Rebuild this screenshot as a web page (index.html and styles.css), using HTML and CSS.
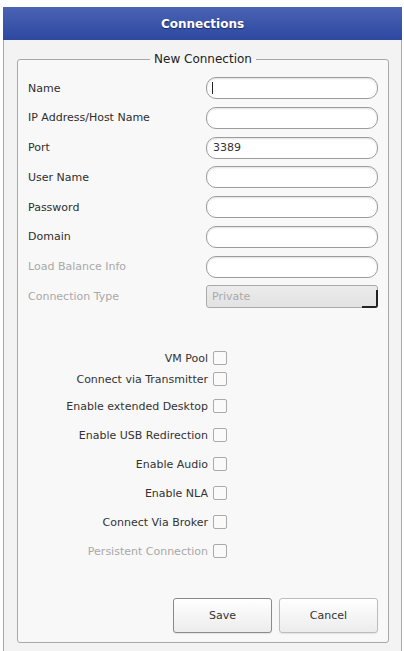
FILE: index.html
```html
<!DOCTYPE html>
<html lang="en">
<head>
  <meta charset="UTF-8" />
  <meta name="viewport" content="width=device-width, initial-scale=1" />
  <title>Connections</title>
  <link rel="stylesheet" href="styles.css">
</head>
<body>
  <div class="window">
    <div class="titlebar">Connections</div>
    <fieldset class="group">
      <legend>New Connection</legend>

      <div class="form-grid">
        <label>Name</label>
        <div class="field has-caret"><input type="text" value="" /></div>
        <label>IP Address/Host Name</label>
        <div class="field"><input type="text" value="" /></div>
        <label>Port</label>
        <div class="field"><input type="text" value="3389" /></div>
        <label>User Name</label>
        <div class="field"><input type="text" value="" /></div>
        <label>Password</label>
        <div class="field"><input type="password" value="" /></div>
        <label>Domain</label>
        <div class="field"><input type="text" value="" /></div>
        <label class="disabled">Load Balance Info</label>
        <div class="field"><input type="text" value="" /></div>
        <label class="disabled">Connection Type</label>
        <div class="select">
          <span class="select-text">Private</span>
          <span class="select-arrow"></span>
        </div>
      </div>

      <div class="checks">
        <div class="check-row row-first"><span>VM Pool</span><span class="box"></span></div>
        <div class="check-row row-second"><span>Connect via Transmitter</span><span class="box"></span></div>
        <div class="check-row"><span>Enable extended Desktop</span><span class="box"></span></div>
        <div class="check-row"><span>Enable USB Redirection</span><span class="box"></span></div>
        <div class="check-row"><span>Enable Audio</span><span class="box"></span></div>
        <div class="check-row"><span>Enable NLA</span><span class="box"></span></div>
        <div class="check-row"><span>Connect Via Broker</span><span class="box"></span></div>
        <div class="check-row disabled"><span>Persistent Connection</span><span class="box"></span></div>
      </div>

      <div class="buttons">
        <button class="default">Save</button>
        <button>Cancel</button>
      </div>
    </fieldset>
  </div>
</body>
</html>
```

FILE: styles.css
```css
body {
  margin: 0;
  background: #fff;
  font-family: "DejaVu Sans", sans-serif;
  font-size: 11px;
  color: #333;
}
.window {
  margin: 7px 2px 0 3px;
  height: 650px;
  border: 1px solid #a9a9a9;
  border-top: none;
  background: #f3f3f3;
  box-sizing: border-box;
}
.titlebar {
  height: 33px;
  margin: 0 -1px;
  background: linear-gradient(#4a63b3, #2e48a1);
  color: #fff;
  font-weight: bold;
  font-size: 12px;
  line-height: 35px;
  text-align: center;
  text-shadow: 0 1px 1px #1a2a60;
}
.group {
  margin: 12px 12px 0 13px;
  padding: 11px 10px 9px 10px;
  border: 1px solid #a8a8a8;
  border-radius: 3px;
  background: #f8f8f8;
}
.group legend {
  margin: 0 auto;
  padding: 0 4px;
  font-size: 12px;
  line-height: 14px;
  color: #222;
}
.form-grid {
  display: grid;
  grid-template-columns: 1fr 172px;
  grid-auto-rows: 22px;
  row-gap: 7.8px;
  align-items: center;
}
.form-grid label {
  color: #2e2e2e;
}
.disabled {
  color: #a8a8a8 !important;
}
.field {
  position: relative;
  height: 22px;
}
.field input {
  width: 100%;
  height: 22px;
  box-sizing: border-box;
  border: 1px solid #9c9c9c;
  border-radius: 10px;
  background: #fff;
  box-shadow: inset 0 1px 2px rgba(0, 0, 0, 0.12);
  padding: 0 6px;
  font-family: "DejaVu Sans", sans-serif;
  font-size: 11px;
  color: #333;
  outline: none;
}
.has-caret::after {
  content: "";
  position: absolute;
  left: 6px;
  top: 5px;
  width: 1px;
  height: 12px;
  background: #222;
}
.select {
  display: flex;
  height: 23px;
  box-sizing: border-box;
  border: 1px solid #aaa;
  border-radius: 3px;
  background: linear-gradient(#ececec, #e2e2e2);
}
.select-text {
  flex: 1;
  padding-left: 5px;
  line-height: 21px;
  color: #aaa;
}
.select-arrow {
  width: 14px;
  margin-top: 4px;
  border-right: 2px solid #222;
  border-bottom: 2px solid #222;
  border-radius: 0 0 3px 0;
  margin-right: -1px;
  margin-bottom: -1px;
}
.checks {
  margin-top: 42px;
}
.check-row {
  display: grid;
  grid-template-columns: 180px 14px;
  column-gap: 5px;
  align-items: center;
  height: 29px;
}
.check-row span:first-child {
  text-align: right;
}
.row-first {
  height: 17px;
}
.row-second {
  height: 25px;
}
.box {
  width: 12px;
  height: 12px;
  border: 1px solid #aaa;
  border-radius: 2px;
  background: #fafafa;
}
.buttons {
  display: flex;
  justify-content: flex-end;
  gap: 7px;
  margin-top: 32px;
}
.buttons button {
  width: 99px;
  height: 35px;
  border: 1px solid #bcbcbc;
  border-radius: 3px;
  background: linear-gradient(#ffffff, #ececec);
  box-shadow: 0 1px 1px rgba(0, 0, 0, 0.08);
  font-family: "DejaVu Sans", sans-serif;
  font-size: 11px;
  color: #333;
}
.buttons button.default {
  border-color: #8a8a8a;
}
```
